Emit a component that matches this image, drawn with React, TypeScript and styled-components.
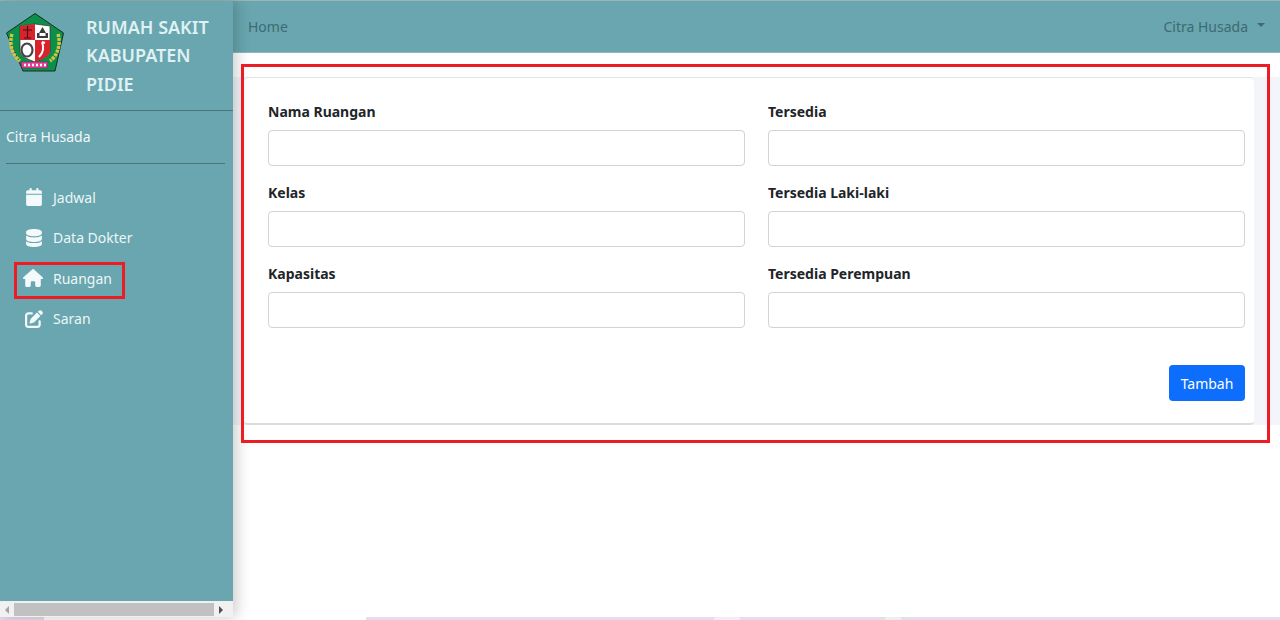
import React from "react";
import styled, { createGlobalStyle } from "styled-components";
import { FaCalendar, FaDatabase, FaHouse, FaPenToSquare } from "react-icons/fa6";

const GlobalStyle = createGlobalStyle`
    html, body {
        margin: 0;
        padding: 0;
        background: #ffffff;
        font-family: "Noto Sans", "Open Sans", sans-serif;
    }
    * {
        box-sizing: border-box;
    }
`;

const Page = styled.div`
    position: relative;
    width: 1280px;
    height: 620px;
    overflow: hidden;
    display: flex;
    flex-direction: column;
`;

const Shell = styled.div`
    display: flex;
    height: 617px;
    border-top: 1px solid #9fb4b8;
`;

const Sidebar = styled.aside`
    position: relative;
    z-index: 2;
    width: 233px;
    flex: none;
    display: flex;
    flex-direction: column;
    background: #69a6af;
    box-shadow: 3px 0 14px rgba(0, 0, 0, 0.22);
`;

const Brand = styled.div`
    display: flex;
    height: 110px;
    flex: none;
    padding: 12px 0 0 6px;
    border-bottom: 1px solid #4d7379;
    gap: 22px;
`;

const BrandName = styled.div`
    width: 140px;
    font-size: 18px;
    line-height: 28.300px;
    font-weight: 600;
    color: #dff1f3;
`;

const UserName = styled.div`
    padding: 16px 0 0 6px;
    height: 52px;
    font-size: 14px;
    line-height: 20px;
    color: #f1f8f9;
    flex: none;
`;

const Divider = styled.div`
    height: 1px;
    margin: 0 8px 0 6px;
    background: #4d7379;
    flex: none;
`;

const Menu = styled.nav`
    display: flex;
    flex-direction: column;
    padding: 13px 0 0 24px;
    flex: 1;
`;

const MenuItem = styled.div`
    display: flex;
    align-items: center;
    height: 40.500px;
    font-size: 14px;
    color: #ecf6f7;
`;

const MenuIcon = styled.span<{ $size: number; $shift: number }>`
    width: 29px;
    flex: none;
    display: flex;
    color: #f4fafb;
    font-size: ${(p) => p.$size}px;
    margin-left: ${(p) => p.$shift}px;
    margin-right: ${(p) => -p.$shift}px;
`;

const Scrollbar = styled.div`
    display: flex;
    align-items: center;
    height: 16px;
    flex: none;
    background: #f1f1f1;
    border-top: 1px solid #e8f1f2;
`;

const ScrollArrow = styled.div<{ $right?: boolean; $dark?: boolean }>`
    width: 14px;
    flex: none;
    display: flex;
    justify-content: center;
    &::before {
        content: "";
        border-top: 4px solid transparent;
        border-bottom: 4px solid transparent;
        ${(p) => (p.$right ? "border-left" : "border-right")}: 4px solid ${(p) => (p.$dark ? "#505050" : "#a3a3a3")};
    }
`;

const ScrollThumb = styled.div`
    width: 200px;
    height: 13px;
    background: #c1c1c1;
`;

const Main = styled.main`
    flex: 1;
    display: flex;
    flex-direction: column;
    min-width: 0;
`;

const Navbar = styled.header`
    display: flex;
    align-items: center;
    justify-content: space-between;
    height: 52px;
    flex: none;
    padding: 0 15px 0 15px;
    background: #69a6af;
    border-bottom: 1px solid #8db8bf;
    font-size: 14px;
    color: #3e6a72;
`;

const NavUser = styled.div`
    display: flex;
    align-items: center;
    gap: 9px;
    &::after {
        content: "";
        border-top: 4.500px solid #3e6a72;
        border-left: 4.500px solid transparent;
        border-right: 4.500px solid transparent;
        margin-top: -3px;
    }
`;

const Content = styled.div`
    height: 361px;
    margin-top: 11px;
    padding: 13px 26px 0 11px;
    background: linear-gradient(#ffffff, #ffffff 13px, #f4f5fa 13px);
    flex: none;
`;

const Card = styled.section`
    height: 348px;
    padding: 23px 9px 0 24px;
    background: #ffffff;
    border-top: 1px solid #e6dfee;
    border-bottom: 2px solid #dcdcdc;
    border-radius: 4px;
`;

const FormGrid = styled.div`
    display: grid;
    grid-template-columns: 477px 477px;
    column-gap: 23px;
`;

const Field = styled.div`
    display: flex;
    flex-direction: column;
    height: 81px;
`;

const Label = styled.label`
    height: 24px;
    margin-bottom: 5px;
    font-size: 14px;
    line-height: 22px;
    font-weight: 700;
    color: #212529;
`;

const Input = styled.input`
    width: 100%;
    height: 36px;
    padding: 6px 12px;
    background: #ffffff;
    border: 1px solid #ced4da;
    border-radius: 4px;
`;

const Actions = styled.div`
    display: flex;
    justify-content: flex-end;
    margin-top: 21px;
`;

const Button = styled.button`
    width: 76px;
    height: 36px;
    background: #0d6efd;
    border: none;
    border-radius: 4px;
    color: #ffffff;
    font-family: inherit;
    font-size: 14px;
`;

const BottomStrip = styled.div`
    display: flex;
    height: 3px;
    flex: none;
    background: #e6dcec;
`;

const StripTab = styled.div<{ $width: number; $offset: number; $color: string }>`
    width: ${(p) => p.$width}px;
    margin-left: ${(p) => p.$offset}px;
    background: ${(p) => p.$color};
`;

const Highlight = styled.div`
    position: absolute;
    z-index: 5;
    border: 3px solid #ed1c24;
    pointer-events: none;
`;

const HighlightMenu = styled(Highlight)`
    left: 14px;
    top: 262px;
    width: 111px;
    height: 37px;
`;

const HighlightForm = styled(Highlight)`
    left: 241px;
    top: 64px;
    width: 1029px;
    height: 379px;
`;

const Logo = () => (
    <svg width="58" height="59" viewBox="0 0 58 59">
        <polygon points="29,0.500 57.500,20 49,58 17,58 0.500,20" fill="#0d8f4c" stroke="#12301e" strokeWidth="1" />
        <path d="M6 21 C3 31 6 42 14 48 M52 21 C55 31 52 42 44 48" fill="none" stroke="#d3c63a" strokeWidth="3.500" strokeDasharray="3 1" />
        <path d="M14 13 L29 11 L44 13 V38 C44 43 37 46 29 49 C21 46 14 43 14 38 Z" fill="#ffffff" stroke="#3a2a2a" strokeWidth="0.700" />
        <path d="M14 13 L29 11 V27 H14 Z" fill="#d8232a" />
        <path d="M29 27 H44 V38 C44 43 37 46 29 49 Z" fill="#d8232a" />
        <path d="M17 17 H26 M21.500 13 V25 M18 25 H25" stroke="#3a1616" strokeWidth="1.200" fill="none" />
        <path d="M31 25 H42 V20 H40 L36.500 14 L33 20 H31 Z" fill="#3a3a3a" />
        <rect x="33.500" y="20" width="6" height="3" fill="#ffffff" />
        <ellipse cx="21" cy="37" rx="5.500" ry="6.500" fill="#ffffff" stroke="#444444" strokeWidth="2.200" />
        <path d="M33 44 C38 39 38 34 36 29 M36 29 L39 30" stroke="#ffffff" strokeWidth="2" fill="none" />
        <path d="M15 49 H42 L41 55 H16 Z" fill="#e2409a" stroke="#7c1c52" strokeWidth="0.500" />
        <path d="M18 52 H40" stroke="#ffffff" strokeWidth="2.500" strokeDasharray="2 2" />
    </svg>
);

const menu = [
    { label: "Jadwal", icon: <FaCalendar />, size: 18, shift: 1 },
    { label: "Data Dokter", icon: <FaDatabase />, size: 18, shift: 1 },
    { label: "Ruangan", icon: <FaHouse />, size: 20, shift: -1 },
    { label: "Saran", icon: <FaPenToSquare />, size: 18, shift: 1 },
];

const fields = ["Nama Ruangan", "Tersedia", "Kelas", "Tersedia Laki-laki", "Kapasitas", "Tersedia Perempuan"];

export default function App() {
    return (
        <Page>
            <GlobalStyle />
            <Shell>
                <Sidebar>
                    <Brand>
                        <Logo />
                        <BrandName>RUMAH SAKIT KABUPATEN PIDIE</BrandName>
                    </Brand>
                    <UserName>Citra Husada</UserName>
                    <Divider />
                    <Menu>
                        {menu.map((item) => (
                            <MenuItem key={item.label}>
                                <MenuIcon $size={item.size} $shift={item.shift}>{item.icon}</MenuIcon>
                                {item.label}
                            </MenuItem>
                        ))}
                    </Menu>
                    <Scrollbar>
                        <ScrollArrow />
                        <ScrollThumb />
                        <ScrollArrow $right $dark />
                    </Scrollbar>
                </Sidebar>
                <Main>
                    <Navbar>
                        <span>Home</span>
                        <NavUser>Citra Husada</NavUser>
                    </Navbar>
                    <Content>
                        <Card>
                            <FormGrid>
                                {fields.map((name) => (
                                    <Field key={name}>
                                        <Label>{name}</Label>
                                        <Input />
                                    </Field>
                                ))}
                            </FormGrid>
                            <Actions>
                                <Button>Tambah</Button>
                            </Actions>
                        </Card>
                    </Content>
                </Main>
            </Shell>
            <BottomStrip>
                <StripTab $width={322} $offset={44} $color="#ffffff" />
                <StripTab $width={26} $offset={348} $color="#f3ecf6" />
                <StripTab $width={16} $offset={145} $color="#eeeeee" />
            </BottomStrip>
            <HighlightMenu />
            <HighlightForm />
        </Page>
    );
}
